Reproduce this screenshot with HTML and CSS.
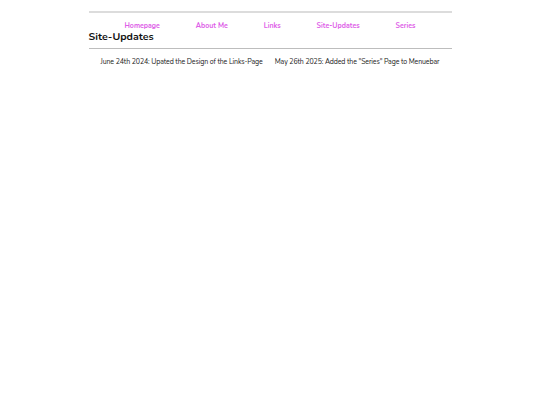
FILE: index.html
```html
<!DOCTYPE html>
<html>
<head>
<meta charset="utf-8">
<link rel="stylesheet" href="styles.css">
</head>
<body>
<div class="page">
  <nav class="menu">
    <a href="#">Homepage</a>
    <a href="#">About Me</a>
    <a href="#">Links</a>
    <a href="#">Site-Updates</a>
    <a href="#">Series</a>
  </nav>
  <h1 class="title">Site-Updates</h1>
  <div class="updates">
    <p>June 24th 2024: Upated the Design of the Links-Page</p>
    <p>May 26th 2025: Added the "Series" Page to Menuebar</p>
  </div>
</div>
</body>
</html>
```

FILE: styles.css
```css
html, body {
  margin: 0;
  padding: 0;
  background: #ffffff;
}
body {
  font-family: "Nunito", Lato, "Open Sans", sans-serif;
}
.page {
  width: 363px;
  margin: 0 auto;
  padding-top: 11px;
}
.menu {
  display: flex;
  justify-content: space-evenly;
  border-top: 2px solid #dcdcdc;
  padding-top: 7px;
  height: 11px;
}
.menu a {
  color: #de5fe8;
  font-size: 7px;
  font-weight: 700;
  text-decoration: none;
  line-height: 11px;
  white-space: nowrap;
}
.title {
  margin: 0;
  font-size: 10.6px;
  font-weight: 700;
  color: #111;
  line-height: 12px;
  padding-bottom: 5px;
  border-bottom: 1px solid #bdbdbd;
}
.updates {
  display: flex;
  justify-content: space-evenly;
  padding-top: 8px;
}
.updates p {
  margin: 0;
  font-size: 7px;
  letter-spacing: -0.12px;
  color: #222;
  line-height: 10px;
  white-space: nowrap;
}
```
